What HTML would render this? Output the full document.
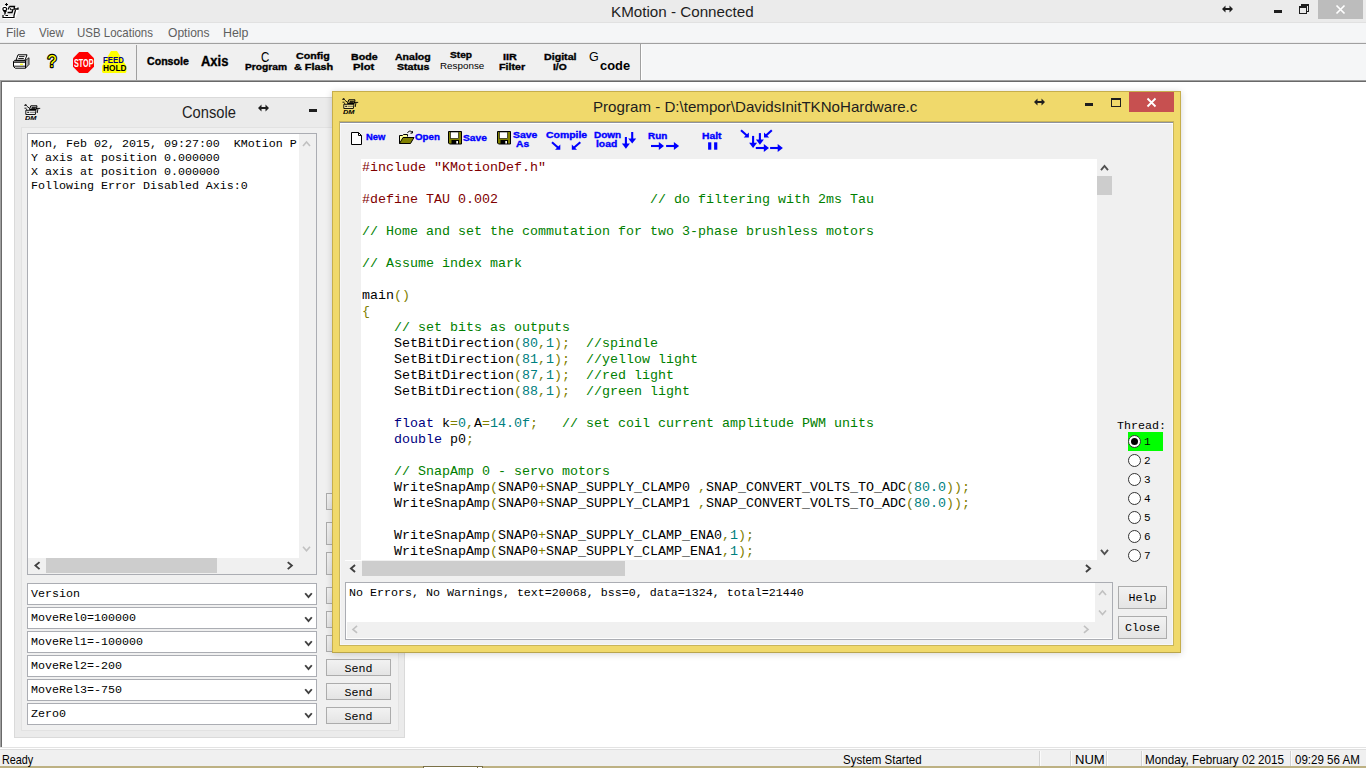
<!DOCTYPE html>
<html lang="en">
<head>
<meta charset="utf-8">
<title>KMotion - Connected</title>
<style>
*{box-sizing:border-box;margin:0;padding:0}
html,body{width:1366px;height:768px;overflow:hidden;background:#fff}
body{position:relative;font-family:"Liberation Sans",sans-serif;color:#000}
.a{position:absolute}
.L{position:absolute;white-space:pre;line-height:1;transform-origin:0 0;font-family:"Liberation Sans",sans-serif}
.m{position:absolute;white-space:pre;font-family:"Liberation Mono",monospace;font-size:11.667px;line-height:14px;color:#000}
svg{position:absolute;overflow:visible}
/* main frame */
#title{left:0;top:0;width:1366px;height:22px;background:#ebebeb}
#xbtn{left:1318px;top:0;width:45px;height:19px;background:#bcbcbc}
#menu{left:0;top:22px;width:1366px;height:21px;background:#f5f6f7;border-bottom:1px solid #ececed}
#tbar{left:0;top:43px;width:1366px;height:37px;background:#f5f6f7;border-top:1px solid #a0a0a0}
#tbin{left:0;top:44px;width:641px;height:36px;background:#f0f0f0;border-right:1px solid #a0a0a0}
.vsep{width:2px;background:#a0a0a0;border-right:1px solid #fff}
#tbline{left:0;top:80px;width:1366px;height:2px;background:#696969;border-top:1px solid #a0a0a0}
#mdil{left:0;top:81px;width:2px;height:667px;background:#696969;border-left:1px solid #a0a0a0}
#status{left:0;top:747px;width:1366px;height:19px;background:#f0f0f0;border-top:1px solid #e3e3e3}
#status i{position:absolute;top:3px;width:2px;height:16px;border-left:1px solid #d2d2d2;border-right:1px solid #fbfbfb}
#under{left:0;top:766px;width:1366px;height:2px;background:#bdb183}
/* generic widgets */
.btn{position:absolute;border:1px solid #acacac;background:linear-gradient(#f2f2f2,#e4e4e4);font-family:"Liberation Mono",monospace;font-size:11.667px;text-align:center;color:#000}
.sb{position:absolute;background:#f0f0f0}
.th{position:absolute;background:#cdcdcd}
.combo{position:absolute;left:27px;width:290px;height:22px;border:1px solid #abadb3;background:#fff}
.combo span{position:absolute;left:3px;top:3px;font-family:"Liberation Mono",monospace;font-size:11.667px;line-height:14px;white-space:pre}
/* console window */
#con{left:14px;top:97px;width:391px;height:641px;background:#ebebeb;border:1px solid #dadada}
#conc{left:21px;top:127px;width:378px;height:604px;background:#f0f0f0;border:1px solid #e2e2e2}
#cont{left:27px;top:133px;width:290px;height:442px;background:#fff;border:1px solid #abadb3}
/* program window */
#prg{left:332px;top:91px;width:849px;height:562px;background:#f0d96b;border:1px solid #c6ae4c;border-bottom-color:#b9a54c;box-shadow:0 1px 7px rgba(0,0,0,.17)}
#prgc{left:339px;top:121px;width:835px;height:525px;background:#f0f0f0;border:1px solid #c9b55a;box-shadow:inset 0 0 0 1px #f6f6f9}
#closebtn{left:1129px;top:92px;width:45px;height:20px;background:#c75050}
#code{left:361px;top:159px;width:736px;height:401px;background:#fff;overflow:hidden}
#code pre{position:absolute;left:1px;top:1px;font-family:"Liberation Mono",monospace;font-size:13.333px;line-height:16px;color:#000;white-space:pre}
.c{color:#008000}.p{color:#800000}.n{color:#008080}.o{color:#808000}.k{color:#000080}
#out{left:345px;top:582px;width:768px;height:58px;background:#fff;border:1px solid #abadb3}
.rad{position:absolute;left:1128px;width:13px;height:13px;border-radius:50%;border:1px solid #333;background:#fff}
.rn{position:absolute;left:1144px;font-family:"Liberation Mono",monospace;font-size:11px;line-height:13px}
</style>
</head>
<body>
<!-- ===== main frame ===== -->
<div id="title" class="a"></div>
<svg style="left:2px;top:2px" width="17" height="17" viewBox="0 0 17 17" fill="none" stroke="#000" stroke-width="1.2">
 <g stroke="#fff" stroke-width="3" stroke-linejoin="round"><path d="M4.500 1v3M3 2.500h3M1 15.500h11l3.500-8.500h-8l-2 4"/><rect x="1" y="5.500" width="3.500" height="3"/></g>
 <path d="M4.500 1v3M3 2.500h3"/><rect x="1" y="5.500" width="3.500" height="3" rx="1" fill="#fff"/><path d="M1.500 9l1.500 2 1.500-2z" fill="#000" stroke-width=".6"/>
 <path d="M1 13v2.500h11v-2.500M2.500 12.500l1-2M12 13.500l1.500-5.500M3.500 13.500h2.500" /><path d="M7.500 4.500h5l-.5 2.500M7.500 4.500l-1.500 3M5.500 10.500h4.500l1-3.500M8 6.500l1.500 1.500M11.500 7h4.500v-1.500" stroke-width="1.300"/>
</svg>
<!-- caption buttons -->
<svg style="left:1222px;top:5px" width="11" height="8" viewBox="0 0 11 8"><path d="M0 4l3.5-3.5v2.5h4V.5L11 4 7.5 7.5V5h-4v2.5z" fill="#1e1e1e"/></svg>
<div class="a" style="left:1274px;top:10px;width:8px;height:3px;background:#1e1e1e"></div>
<div class="a" style="left:1301px;top:4px;width:8px;height:8px;border:1px solid #1e1e1e;border-top-width:2px"></div>
<div class="a" style="left:1299px;top:6px;width:8px;height:8px;border:1px solid #1e1e1e;border-top-width:2px;background:#ebebeb"></div>
<div id="xbtn" class="a"></div>
<svg style="left:1336px;top:5px" width="9" height="9" viewBox="0 0 9 9"><path d="M.5.5l8 8M8.500.5l-8 8" stroke="#fff" stroke-width="1.7"/></svg>
<div id="menu" class="a"></div>
<div class="a" style="left:0;top:22px;width:1366px;height:1px;background:#e1e1e1"></div>
<div id="tbar" class="a"></div>
<div id="tbin" class="a"></div>
<div class="a" style="left:136px;top:45px;width:1px;height:35px;background:#a0a0a0"></div>
<div class="a" style="left:641px;top:45px;width:1px;height:35px;background:#fff"></div>
<!-- toolbar icons -->
<svg style="left:13px;top:53.500px" width="17" height="15" viewBox="0 0 17 15" fill="#fff" stroke="#000" stroke-width="1" stroke-linejoin="round">
 <path d="M12.500 6.500l3.500-2.800v6.800l-3.500 3.700z" fill="#a8a8a8" stroke-width=".8"/>
 <path d="M3 6.300L5 .8h9L12 6.300z"/><path d="M6 2.600h5.500M5.300 4.500h5.500" fill="none" stroke-width=".9"/>
 <path d="M1.500 6.400h11v7.800h-10.200l-1.800-1.600v-5.200z"/>
 <path d="M.5 8.100h12" fill="none" stroke-width="1.300"/><path d="M.8 12.200h11.700" fill="none" stroke-width=".9"/>
 <path d="M7 10.300h3" stroke="#ff0" stroke-width="1.200"/>
</svg>
<svg style="left:0;top:0" width="1" height="1"><text x="52.100" y="67.200" font-family="Liberation Sans, sans-serif" font-size="17" font-weight="400" text-anchor="middle" fill="#ff0" stroke="#000" stroke-width="2.400" stroke-linejoin="round" paint-order="stroke" transform="translate(52.1 0) scale(.95 1) translate(-52.1 0)">?</text></svg>
<svg style="left:73px;top:52px" width="21" height="21" viewBox="0 0 21 21"><path d="M6.200 0h8.600L21 6.200v8.600L14.800 21H6.200L0 14.800V6.200z" fill="#f00"/></svg>
<svg style="left:102px;top:51px" width="25" height="22" viewBox="0 0 25 22"><path d="M9 0h6l9.300 15v6l-1 1H1l-1-1v-6z" fill="#ff0"/></svg>
<div id="tbline" class="a"></div>
<div id="mdil" class="a"></div>
<!-- status bar -->
<div id="status" class="a"><div class="a" style="left:0;top:0;width:1366px;height:1px;background:#fff"></div><div class="a" style="left:0;top:1px;width:1366px;height:1px;background:#dedede"></div>
<i style="left:1039px"></i><i style="left:1070px"></i><i style="left:1106px"></i><i style="left:1141px"></i><i style="left:1290px"></i></div>
<div id="under" class="a"></div>
<div class="a" style="left:423px;top:766px;width:60px;height:2px;background:#fff;border:1px solid #7a7046;border-bottom:0"></div>
<div class="a" style="left:477px;top:766px;width:1px;height:2px;background:#7a7046"></div>
<!-- ===== console window ===== -->
<div id="con" class="a"></div>
<svg style="left:24px;top:104px" width="17" height="11" viewBox="0 0 17 11" fill="none" stroke="#000" stroke-width=".9"><path d="M1.500 0l.8 1.800M.2 1.300h2.600M.5 4.200h2M2.800 2.200l3 2.300M2.200 5.200l1.200 1"/><path d="M1.800 6.300h10.200l-.7 4.200H1.800z" fill="#fff" fill-opacity=".35"/><path d="M3.200 8.300h2" stroke-width="1"/><path d="M6 8.300h5.500" stroke-width=".5"/><path d="M6.800 1.800h6.200l-.7 3.700H5.500z" stroke-width="1"/><path d="M8 3.200h3.800l-.4 1.600H7.500z" fill="#000" stroke-width=".5"/><path d="M13 4.400h3.200M14 4.400l-.8 4.600"/></svg><span class="L" style="left:25.3px;top:114.8px;font-size:6.2px;font-weight:700;font-style:italic;transform:scaleX(1.2)">DM</span>
<svg style="left:258px;top:104px" width="11" height="8" viewBox="0 0 11 8"><path d="M0 4l3.500-3.500v2.500h4V.5L11 4 7.500 7.500V5h-4v2.500z" fill="#1e1e1e"/></svg>
<div class="a" style="left:309px;top:109px;width:8px;height:3px;background:#1e1e1e"></div>
<div id="conc" class="a"></div>
<div class="btn" style="left:326px;top:493px;width:65px;height:17px"></div>
<div class="btn" style="left:326px;top:522px;width:65px;height:23px"></div>
<div class="btn" style="left:326px;top:552px;width:65px;height:23px"></div>
<div class="btn" style="left:326px;top:587px;width:65px;height:17px"></div>
<div class="btn" style="left:326px;top:611px;width:65px;height:17px"></div>
<div class="btn" style="left:326px;top:635px;width:65px;height:17px"></div>
<div class="btn" style="left:326px;top:659px;width:65px;height:17px;line-height:18px">Send</div>
<div class="btn" style="left:326px;top:683px;width:65px;height:17px;line-height:18px">Send</div>
<div class="btn" style="left:326px;top:707px;width:65px;height:17px;line-height:18px">Send</div>
<div id="cont" class="a"></div>
<div class="a" style="left:28px;top:134px;width:271px;height:424px;overflow:hidden"><span class="m" style="left:3px;top:3px">Mon, Feb 02, 2015, 09:27:00  KMotion P</span><span class="m" style="left:3px;top:17px">Y axis at position 0.000000</span><span class="m" style="left:3px;top:31px">X axis at position 0.000000</span><span class="m" style="left:3px;top:45px">Following Error Disabled Axis:0</span></div>
<div class="sb" style="left:299px;top:134px;width:17px;height:440px"></div>
<div class="sb" style="left:28px;top:558px;width:271px;height:16px"></div>
<div class="th" style="left:46px;top:558px;width:171px;height:15px"></div>
<svg style="left:0;top:0" width="1" height="1"><path d="M303.0 146.05L306.5 141.95L310.0 146.05" fill="none" stroke="#c1c1c1" stroke-width="1.6"/></svg>
<svg style="left:0;top:0" width="1" height="1"><path d="M303.0 546.75L306.5 550.8499999999999L310.0 546.75" fill="none" stroke="#c1c1c1" stroke-width="1.6"/></svg>
<svg style="left:0;top:0" width="1" height="1"><path d="M39.55 562.1L35.45 565.6L39.55 569.1" fill="none" stroke="#404040" stroke-width="1.9"/></svg>
<svg style="left:0;top:0" width="1" height="1"><path d="M287.75 562.1L291.85 565.6L287.75 569.1" fill="none" stroke="#404040" stroke-width="1.9"/></svg>
<div class="combo" style="top:583px"><span>Version</span></div>
<svg style="left:0;top:0" width="1" height="1"><path d="M305.2 593.25L308.5 597.1500000000001L311.8 593.25" fill="none" stroke="#404040" stroke-width="1.9"/></svg>
<div class="combo" style="top:607px"><span>MoveRel0=100000</span></div>
<svg style="left:0;top:0" width="1" height="1"><path d="M305.2 617.25L308.5 621.1500000000001L311.8 617.25" fill="none" stroke="#404040" stroke-width="1.9"/></svg>
<div class="combo" style="top:631px"><span>MoveRel1=-100000</span></div>
<svg style="left:0;top:0" width="1" height="1"><path d="M305.2 641.25L308.5 645.1500000000001L311.8 641.25" fill="none" stroke="#404040" stroke-width="1.9"/></svg>
<div class="combo" style="top:655px"><span>MoveRel2=-200</span></div>
<svg style="left:0;top:0" width="1" height="1"><path d="M305.2 665.25L308.5 669.1500000000001L311.8 665.25" fill="none" stroke="#404040" stroke-width="1.9"/></svg>
<div class="combo" style="top:679px"><span>MoveRel3=-750</span></div>
<svg style="left:0;top:0" width="1" height="1"><path d="M305.2 689.25L308.5 693.1500000000001L311.8 689.25" fill="none" stroke="#404040" stroke-width="1.9"/></svg>
<div class="combo" style="top:703px"><span>Zero0</span></div>
<svg style="left:0;top:0" width="1" height="1"><path d="M305.2 713.25L308.5 717.1500000000001L311.8 713.25" fill="none" stroke="#404040" stroke-width="1.9"/></svg>
<!-- ===== program window ===== -->
<div id="prg" class="a"></div>
<svg style="left:342px;top:98px" width="17" height="11" viewBox="0 0 17 11" fill="none" stroke="#000" stroke-width=".9"><path d="M1.500 0l.8 1.800M.2 1.300h2.600M.5 4.200h2M2.800 2.200l3 2.300M2.200 5.200l1.200 1"/><path d="M1.800 6.300h10.200l-.7 4.200H1.800z" fill="#fff" fill-opacity=".35"/><path d="M3.200 8.300h2" stroke-width="1"/><path d="M6 8.300h5.500" stroke-width=".5"/><path d="M6.800 1.800h6.200l-.7 3.700H5.500z" stroke-width="1"/><path d="M8 3.200h3.800l-.4 1.600H7.500z" fill="#000" stroke-width=".5"/><path d="M13 4.400h3.200M14 4.400l-.8 4.600"/></svg><span class="L" style="left:343.3px;top:108.8px;font-size:6.2px;font-weight:700;font-style:italic;transform:scaleX(1.2)">DM</span>
<svg style="left:1034px;top:98px" width="11" height="8" viewBox="0 0 11 8"><path d="M0 4l3.500-3.500v2.500h4V.5L11 4 7.500 7.500V5h-4v2.500z" fill="#1e1e1e"/></svg>
<div class="a" style="left:1085px;top:103px;width:8px;height:3px;background:#1e1e1e"></div>
<div class="a" style="left:1111px;top:98px;width:10px;height:9px;border:1px solid #1e1e1e;border-top-width:2px"></div>
<div id="closebtn" class="a"></div>
<svg style="left:1147px;top:98px" width="9" height="9" viewBox="0 0 9 9"><path d="M.5.5l8 8M8.500.5l-8 8" stroke="#fff" stroke-width="1.800"/></svg>
<div id="prgc" class="a"></div>
<div class="a" style="left:340px;top:122px;width:833px;height:2px;background:#fff;border-top:1px solid #8e929c"></div>
<svg style="left:351px;top:132px" width="11" height="13" viewBox="0 0 11 13"><path d="M.5.5h7l3 3v9H.5z" fill="#fff" stroke="#000"/><path d="M7.500.5v3h3" fill="none" stroke="#000"/></svg>
<svg style="left:399px;top:130px" width="16" height="14" viewBox="0 0 16 14"><path d="M.5 13.500v-8h3l1-1h4v2" fill="#ff9" stroke="#000"/><path d="M.5 13.500l3.500-6h11l-3.500 6z" fill="#808000" stroke="#000"/><path d="M8.500 3c1-2.500 4-2.500 5 0M13.500 3l-.2-2M13.500 3l-2 .2" fill="none" stroke="#000"/></svg>
<svg style="left:448px;top:131px" width="14" height="14" viewBox="0 0 14 14"><path d="M.5.5h13v12.500H1.500l-1-1z" fill="#808000" stroke="#000"/><rect x="2.500" y="1" width="8" height="6.500" fill="#fff" stroke="#000" stroke-width=".6"/><rect x="3.500" y="9" width="7.500" height="4" fill="#000"/><rect x="8.300" y="10" width="1.700" height="2.500" fill="#fff"/></svg>
<svg style="left:497px;top:131px" width="14" height="14" viewBox="0 0 14 14"><path d="M.5.5h13v12.500H1.500l-1-1z" fill="#808000" stroke="#000"/><rect x="2.500" y="1" width="8" height="6.500" fill="#fff" stroke="#000" stroke-width=".6"/><rect x="3.500" y="9" width="7.500" height="4" fill="#000"/><rect x="8.300" y="10" width="1.700" height="2.500" fill="#fff"/></svg>
<svg style="left:0;top:0" width="1" height="1"><path d="M552.0 142.3L558.8 148.3" stroke="#00f" stroke-width="2.1" fill="none"/><path d="M560.3 149.8L555.1 149.8L560.3 144.6z" fill="#00f"/><path d="M580.3 142.3L573.3 148.3" stroke="#00f" stroke-width="2.1" fill="none"/><path d="M571.8 149.8L577.0 149.8L571.8 144.6z" fill="#00f"/><path d="M625.9 137.0L625.9 144.6" stroke="#00f" stroke-width="2.1" fill="none"/><path d="M625.9 148.8L621.9 143.6L629.9 143.6z" fill="#00f"/><path d="M632.2 132.0L632.2 139.4" stroke="#00f" stroke-width="2.1" fill="none"/><path d="M632.2 143.6L628.2 138.4L636.2 138.4z" fill="#00f"/><path d="M651.0 146.0L659.8 146.0" stroke="#00f" stroke-width="2.1" fill="none"/><path d="M664.0 146.0L658.8 150.0L658.8 142.0z" fill="#00f"/><path d="M666.1 146.0L674.9 146.0" stroke="#00f" stroke-width="2.1" fill="none"/><path d="M679.1 146.0L673.9 150.0L673.9 142.0z" fill="#00f"/><path d="M741.0 130.2L747.4 136.1" stroke="#00f" stroke-width="2.1" fill="none"/><path d="M748.9 137.6L743.7 137.6L748.9 132.4z" fill="#00f"/><path d="M771.8 130.2L765.5 136.1" stroke="#00f" stroke-width="2.1" fill="none"/><path d="M764.0 137.6L769.2 137.6L764.0 132.4z" fill="#00f"/><path d="M753.1 135.9L753.1 143.8" stroke="#00f" stroke-width="2.1" fill="none"/><path d="M753.1 148.0L749.1 142.8L757.1 142.8z" fill="#00f"/><path d="M759.9 133.1L759.9 140.5" stroke="#00f" stroke-width="2.1" fill="none"/><path d="M759.9 144.7L755.9 139.5L763.9 139.5z" fill="#00f"/><path d="M755.8 148.0L764.8 148.0" stroke="#00f" stroke-width="2.1" fill="none"/><path d="M769.0 148.0L763.8 152.0L763.8 144.0z" fill="#00f"/><path d="M770.1 148.0L778.7 148.0" stroke="#00f" stroke-width="2.1" fill="none"/><path d="M782.9 148.0L777.7 152.0L777.7 144.0z" fill="#00f"/><rect x="708.100" y="142.300" width="3.200" height="7.400" fill="#00f"/><rect x="714.100" y="142.300" width="3.200" height="7.400" fill="#00f"/></svg>
<div class="a" style="left:345px;top:560px;width:17px;height:1px;background:#fff"></div>
<div id="code" class="a"><pre><span class="p">#include "KMotionDef.h"</span>

<span class="p">#define TAU 0.002                   </span><span class="c">// do filtering with 2ms Tau</span>

<span class="c">// Home and set the commutation for two 3-phase brushless motors</span>

<span class="c">// Assume index mark</span>

main<span class="o">()</span>
<span class="o">{</span>
    <span class="c">// set bits as outputs</span>
    SetBitDirection<span class="o">(</span><span class="n">80</span><span class="o">,</span><span class="n">1</span><span class="o">);</span>  <span class="c">//spindle</span>
    SetBitDirection<span class="o">(</span><span class="n">81</span><span class="o">,</span><span class="n">1</span><span class="o">);</span>  <span class="c">//yellow light</span>
    SetBitDirection<span class="o">(</span><span class="n">87</span><span class="o">,</span><span class="n">1</span><span class="o">);</span>  <span class="c">//red light</span>
    SetBitDirection<span class="o">(</span><span class="n">88</span><span class="o">,</span><span class="n">1</span><span class="o">);</span>  <span class="c">//green light</span>

    <span class="k">float</span> k<span class="o">=</span><span class="n">0</span><span class="o">,</span>A<span class="o">=</span><span class="n">14.0f</span><span class="o">;</span>   <span class="c">// set coil current amplitude PWM units</span>
    <span class="k">double</span> p0<span class="o">;</span>

    <span class="c">// SnapAmp 0 - servo motors</span>
    WriteSnapAmp<span class="o">(</span>SNAP0<span class="o">+</span>SNAP_SUPPLY_CLAMP0 <span class="o">,</span>SNAP_CONVERT_VOLTS_TO_ADC<span class="o">(</span><span class="n">80.0</span><span class="o">));</span>
    WriteSnapAmp<span class="o">(</span>SNAP0<span class="o">+</span>SNAP_SUPPLY_CLAMP1 <span class="o">,</span>SNAP_CONVERT_VOLTS_TO_ADC<span class="o">(</span><span class="n">80.0</span><span class="o">));</span>

    WriteSnapAmp<span class="o">(</span>SNAP0<span class="o">+</span>SNAP_SUPPLY_CLAMP_ENA0<span class="o">,</span><span class="n">1</span><span class="o">);</span>
    WriteSnapAmp<span class="o">(</span>SNAP0<span class="o">+</span>SNAP_SUPPLY_CLAMP_ENA1<span class="o">,</span><span class="n">1</span><span class="o">);</span></pre></div>
<div class="th" style="left:1097px;top:176px;width:15px;height:19px"></div>
<svg style="left:0;top:0" width="1" height="1"><path d="M1101.0 170.05L1104.5 165.95L1108.0 170.05" fill="none" stroke="#505050" stroke-width="1.9"/></svg>
<svg style="left:0;top:0" width="1" height="1"><path d="M1101.0 549.95L1104.5 554.05L1108.0 549.95" fill="none" stroke="#505050" stroke-width="1.9"/></svg>
<div class="th" style="left:362px;top:561px;width:263px;height:15px"></div>
<svg style="left:0;top:0" width="1" height="1"><path d="M355.05 565.0L350.95 568.5L355.05 572.0" fill="none" stroke="#404040" stroke-width="1.9"/></svg>
<svg style="left:0;top:0" width="1" height="1"><path d="M1085.95 565.0L1090.05 568.5L1085.95 572.0" fill="none" stroke="#404040" stroke-width="1.9"/></svg>
<div id="out" class="a"></div>
<div class="sb" style="left:1095px;top:583px;width:17px;height:39px"></div>
<div class="sb" style="left:347px;top:622px;width:765px;height:16px"></div>
<span class="m" style="left:349px;top:586px">No Errors, No Warnings, text=20068, bss=0, data=1324, total=21440</span>
<svg style="left:0;top:0" width="1" height="1"><path d="M1099.0 595.05L1102.5 590.95L1106.0 595.05" fill="none" stroke="#c1c1c1" stroke-width="1.6"/></svg>
<svg style="left:0;top:0" width="1" height="1"><path d="M1099.0 610.45L1102.5 614.55L1106.0 610.45" fill="none" stroke="#c1c1c1" stroke-width="1.6"/></svg>
<svg style="left:0;top:0" width="1" height="1"><path d="M357.05 625.9L352.95 629.4L357.05 632.9" fill="none" stroke="#c1c1c1" stroke-width="1.6"/></svg>
<svg style="left:0;top:0" width="1" height="1"><path d="M1083.95 625.9L1088.05 629.4L1083.95 632.9" fill="none" stroke="#c1c1c1" stroke-width="1.6"/></svg>
<span class="m" style="left:1117px;top:419px">Thread:</span>
<div class="a" style="left:1128px;top:432px;width:35px;height:19px;background:#0f0"></div>
<div class="rad" style="top:435.0px"></div><span class="rn" style="top:435.5px">1</span>
<div class="rad" style="top:454.0px"></div><span class="rn" style="top:454.5px">2</span>
<div class="rad" style="top:473.0px"></div><span class="rn" style="top:473.5px">3</span>
<div class="rad" style="top:492.0px"></div><span class="rn" style="top:492.5px">4</span>
<div class="rad" style="top:511.0px"></div><span class="rn" style="top:511.5px">5</span>
<div class="rad" style="top:530.0px"></div><span class="rn" style="top:530.5px">6</span>
<div class="rad" style="top:549.0px"></div><span class="rn" style="top:549.5px">7</span>
<div class="a" style="left:1131px;top:438px;width:7px;height:7px;border-radius:50%;background:#000"></div>
<div class="btn" style="left:1118px;top:586px;width:49px;height:23px;line-height:22px">Help</div>
<div class="btn" style="left:1118px;top:616px;width:49px;height:23px;line-height:22px">Close</div>

<!-- fitted text labels -->
<span class="L" style="left:611px;top:4px;font-size:15px;font-weight:400;color:#1e1e1e;transform:scaleX(1.013)">KMotion - Connected</span>
<span class="L" style="left:182px;top:105px;font-size:15.6px;font-weight:400;color:#1e1e1e;transform:scaleX(0.943)">Console</span>
<span class="L" style="left:593px;top:99px;font-size:15px;font-weight:400;color:#1e1e1e;transform:scaleX(1.008)">Program - D:\tempor\DavidsInitTKNoHardware.c</span>
<span class="L" style="left:6px;top:28px;font-size:11.9px;font-weight:400;color:#5f5f5f;transform:scaleX(1.012)">File</span>
<span class="L" style="left:39px;top:28px;font-size:11.9px;font-weight:400;color:#5f5f5f;transform:scaleX(0.970)">View</span>
<span class="L" style="left:77px;top:28px;font-size:11.9px;font-weight:400;color:#5f5f5f;transform:scaleX(0.966)">USB Locations</span>
<span class="L" style="left:168px;top:28px;font-size:11.9px;font-weight:400;color:#5f5f5f;transform:scaleX(1.015)">Options</span>
<span class="L" style="left:223px;top:28px;font-size:11.9px;font-weight:400;color:#5f5f5f;transform:scaleX(1.043)">Help</span>
<span class="L" style="left:147px;top:57px;font-size:10.0px;font-weight:700;color:#000;transform:scaleX(1.060);-webkit-text-stroke:.35px #000">Console</span>
<span class="L" style="left:201px;top:55px;font-size:13.8px;font-weight:700;color:#000;transform:scaleX(0.938);-webkit-text-stroke:.35px #000">Axis</span>
<span class="L" style="left:261px;top:51px;font-size:13.8px;font-weight:400;color:#000;transform:scaleX(0.833)">C</span>
<span class="L" style="left:245px;top:63px;font-size:9.2px;font-weight:700;color:#000;transform:scaleX(1.111);-webkit-text-stroke:.35px #000">Program</span>
<span class="L" style="left:296px;top:52px;font-size:9.2px;font-weight:700;color:#000;transform:scaleX(1.159);-webkit-text-stroke:.35px #000">Config</span>
<span class="L" style="left:294px;top:63px;font-size:9.2px;font-weight:700;color:#000;transform:scaleX(1.182);-webkit-text-stroke:.35px #000">&amp; Flash</span>
<span class="L" style="left:351px;top:52px;font-size:9.4px;font-weight:700;color:#000;transform:scaleX(1.134);-webkit-text-stroke:.35px #000">Bode</span>
<span class="L" style="left:353px;top:62px;font-size:9.4px;font-weight:700;color:#000;transform:scaleX(1.200);-webkit-text-stroke:.35px #000">Plot</span>
<span class="L" style="left:395px;top:52px;font-size:9.4px;font-weight:700;color:#000;transform:scaleX(1.125);-webkit-text-stroke:.35px #000">Analog</span>
<span class="L" style="left:397px;top:62px;font-size:9.4px;font-weight:700;color:#000;transform:scaleX(1.131);-webkit-text-stroke:.35px #000">Status</span>
<span class="L" style="left:450px;top:50px;font-size:9.4px;font-weight:700;color:#000;transform:scaleX(1.081);-webkit-text-stroke:.35px #000">Step</span>
<span class="L" style="left:440px;top:61px;font-size:9.4px;font-weight:400;color:#000;transform:scaleX(1.049)">Response</span>
<span class="L" style="left:503px;top:52px;font-size:9.4px;font-weight:700;color:#000;transform:scaleX(1.151);-webkit-text-stroke:.35px #000">IIR</span>
<span class="L" style="left:499px;top:62px;font-size:9.4px;font-weight:700;color:#000;transform:scaleX(1.139);-webkit-text-stroke:.35px #000">Filter</span>
<span class="L" style="left:544px;top:52px;font-size:9.4px;font-weight:700;color:#000;transform:scaleX(1.136);-webkit-text-stroke:.35px #000">Digital</span>
<span class="L" style="left:553px;top:62px;font-size:9.4px;font-weight:700;color:#000;transform:scaleX(1.092);-webkit-text-stroke:.35px #000">I/O</span>
<span class="L" style="left:589px;top:50px;font-size:13.1px;font-weight:400;color:#000;transform:scaleX(0.957)">G</span>
<span class="L" style="left:600px;top:59px;font-size:13.4px;font-weight:700;color:#000;transform:scaleX(0.961)">code</span>
<span class="L" style="left:366px;top:133px;font-size:9.2px;font-weight:700;color:#0000ff;transform:scaleX(1.021);-webkit-text-stroke:.35px #0000ff">New</span>
<span class="L" style="left:415px;top:133px;font-size:9.2px;font-weight:700;color:#0000ff;transform:scaleX(1.061);-webkit-text-stroke:.35px #0000ff">Open</span>
<span class="L" style="left:463px;top:134px;font-size:9.2px;font-weight:700;color:#0000ff;transform:scaleX(1.116);-webkit-text-stroke:.35px #0000ff">Save</span>
<span class="L" style="left:513px;top:131px;font-size:8.3px;font-weight:700;color:#0000ff;transform:scaleX(1.252);-webkit-text-stroke:.35px #0000ff">Save</span>
<span class="L" style="left:516px;top:140px;font-size:8.9px;font-weight:700;color:#0000ff;transform:scaleX(1.156);-webkit-text-stroke:.35px #0000ff">As</span>
<span class="L" style="left:546px;top:131px;font-size:8.7px;font-weight:700;color:#0000ff;transform:scaleX(1.200);-webkit-text-stroke:.35px #0000ff">Compile</span>
<span class="L" style="left:594px;top:131px;font-size:8.8px;font-weight:700;color:#0000ff;transform:scaleX(1.133);-webkit-text-stroke:.35px #0000ff">Down</span>
<span class="L" style="left:596px;top:140px;font-size:9.0px;font-weight:700;color:#0000ff;transform:scaleX(1.145);-webkit-text-stroke:.35px #0000ff">load</span>
<span class="L" style="left:648px;top:132px;font-size:9.2px;font-weight:700;color:#0000ff;transform:scaleX(1.078);-webkit-text-stroke:.35px #0000ff">Run</span>
<span class="L" style="left:702px;top:132px;font-size:9.2px;font-weight:700;color:#0000ff;transform:scaleX(1.122);-webkit-text-stroke:.35px #0000ff">Halt</span>
<span class="L" style="left:2px;top:754px;font-size:12.2px;font-weight:400;color:#000;transform:scaleX(0.888)">Ready</span>
<span class="L" style="left:843px;top:754px;font-size:12.2px;font-weight:400;color:#000;transform:scaleX(0.944)">System Started</span>
<span class="L" style="left:1075px;top:754px;font-size:12.2px;font-weight:400;color:#000;transform:scaleX(1.069)">NUM</span>
<span class="L" style="left:1145px;top:754px;font-size:12.2px;font-weight:400;color:#000;transform:scaleX(0.956)">Monday, February 02 2015</span>
<span class="L" style="left:1295px;top:754px;font-size:12.2px;font-weight:400;color:#000;transform:scaleX(0.947)">09:29 56 AM</span>
<span class="L" style="left:74px;top:59px;font-size:10.4px;font-weight:700;color:#fff;transform:scaleX(0.693)">STOP</span>
<span class="L" style="left:103px;top:56px;font-size:9.0px;font-weight:700;color:#000080;transform:scaleX(0.867)">FEED</span>
<span class="L" style="left:103px;top:64px;font-size:9.0px;font-weight:700;color:#000;transform:scaleX(0.920)">HOLD</span>
</body>
</html>
